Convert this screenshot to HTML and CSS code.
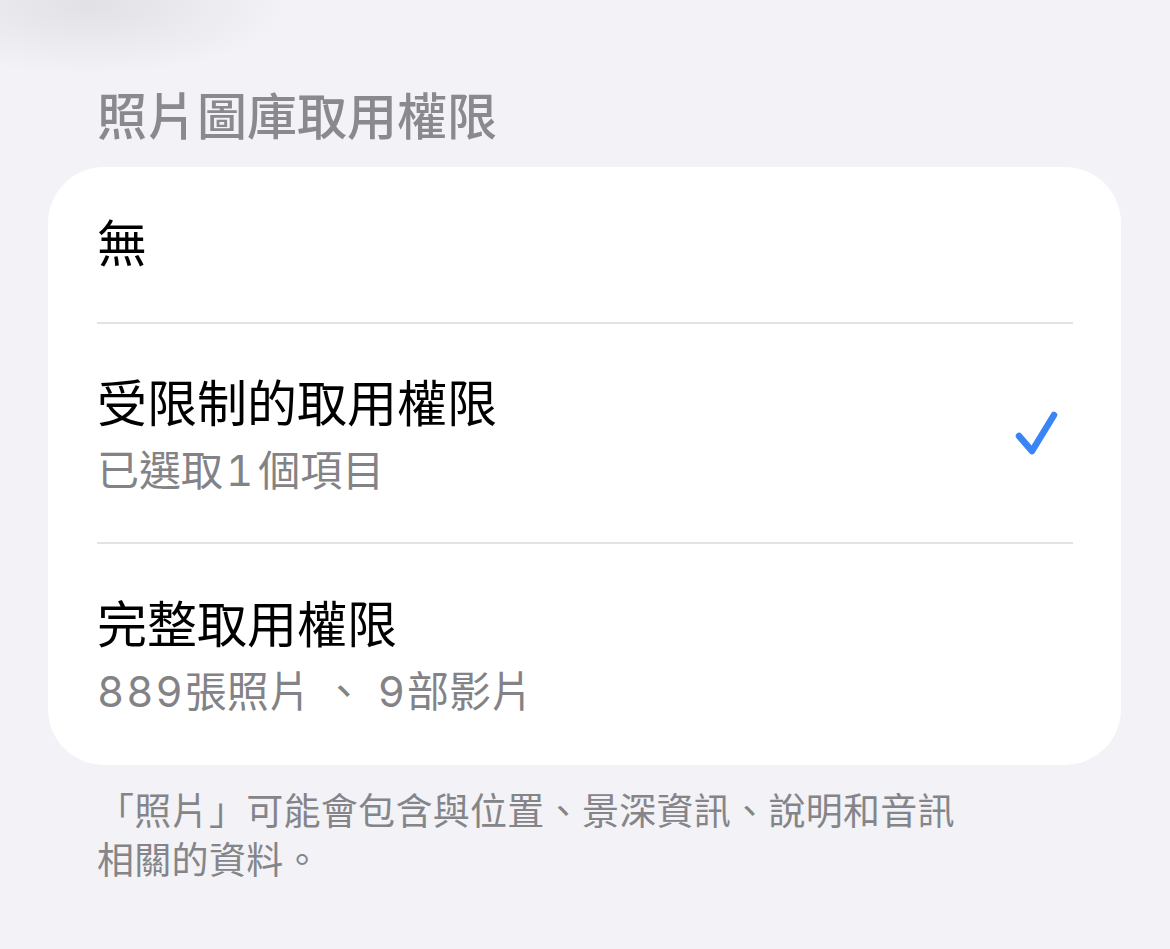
FILE: index.html
```html
<!DOCTYPE html>
<html lang="zh-Hant">
<head>
<meta charset="utf-8">
<link rel="stylesheet" href="styles.css">
</head>
<body>
<div class="page">
  <div class="section-header">照片圖庫取用權限</div>
  <div class="card">
    <div class="row row-single">
      <div class="row-text row-text-single"><div class="title">無</div></div>
    </div>
    <div class="row">
      <div class="row-text">
        <div class="title">受限制的取用權限</div>
        <div class="subtitle">已選取<span class="num num-one">1</span>個項目</div>
      </div>
      <svg class="check" viewBox="0 0 50 50" width="50" height="50">
        <path d="M8 28 L21 43 L43 7" fill="none" stroke="#3a85f5" stroke-width="6.5" stroke-linecap="round" stroke-linejoin="round"/>
      </svg>
    </div>
    <div class="row row-last">
      <div class="row-text">
        <div class="title">完整取用權限</div>
        <div class="subtitle"><span class="num">889</span>張照片<span class="comma">、</span><span class="num num-after">9</span>部影片</div>
      </div>
    </div>
  </div>
  <div class="footer">「照片」可能會包含與位置、景深資訊、說明和音訊<br>相關的資料。</div>
</div>
</body>
</html>
```

FILE: styles.css
```css
html, body {
  margin: 0;
  padding: 0;
}
body {
  width: 1170px;
  height: 949px;
  overflow: hidden;
  background-color: #f2f2f7;
  background-image: radial-gradient(ellipse 200px 70px at 90px 5px, rgba(220,220,225,0.8), rgba(242,242,247,0));
  font-family: "Noto Sans CJK TC", "Noto Sans", sans-serif;
}
.page {
  padding: 0 49px 0 48px;
}
.section-header {
  padding: 83px 0 0 49px;
  margin-bottom: 24px;
  font-size: 50px;
  line-height: 60px;
  font-weight: 500;
  color: #8a8a8e;
}
.card {
  background: #ffffff;
  border-radius: 56px;
  padding: 0 48px 0 49px;
}
.row {
  display: flex;
  align-items: center;
  justify-content: space-between;
  height: 220px;
  border-bottom: 2px solid #e3e3e6;
  box-sizing: border-box;
}
.row-single {
  height: 157px;
}
.row-last {
  border-bottom: none;
  height: 221px;
}
.row-text {
  padding-top: 8px;
}
.row-text-single {
  padding-top: 0;
  padding-bottom: 10px;
}
.title {
  font-size: 50px;
  line-height: 62px;
  color: #000;
}
.subtitle {
  margin-top: 2px;
  font-size: 42px;
  line-height: 70px;
  color: #838387;
}
.num {
  font-family: "Inter", "Noto Sans", sans-serif;
  font-variant-numeric: tabular-nums;
  letter-spacing: 2px;
}
.num-one {
  margin-left: 3px;
  margin-right: 3px;
}
.comma {
  margin-left: 12px;
}
.num-after {
  margin-left: 13px;
}
.check {
  margin-right: 12px;
  display: block;
}
.footer {
  padding: 20px 0 0 49px;
  font-size: 37px;
  line-height: 49px;
  letter-spacing: 0.3px;
  color: #858589;
}
```
